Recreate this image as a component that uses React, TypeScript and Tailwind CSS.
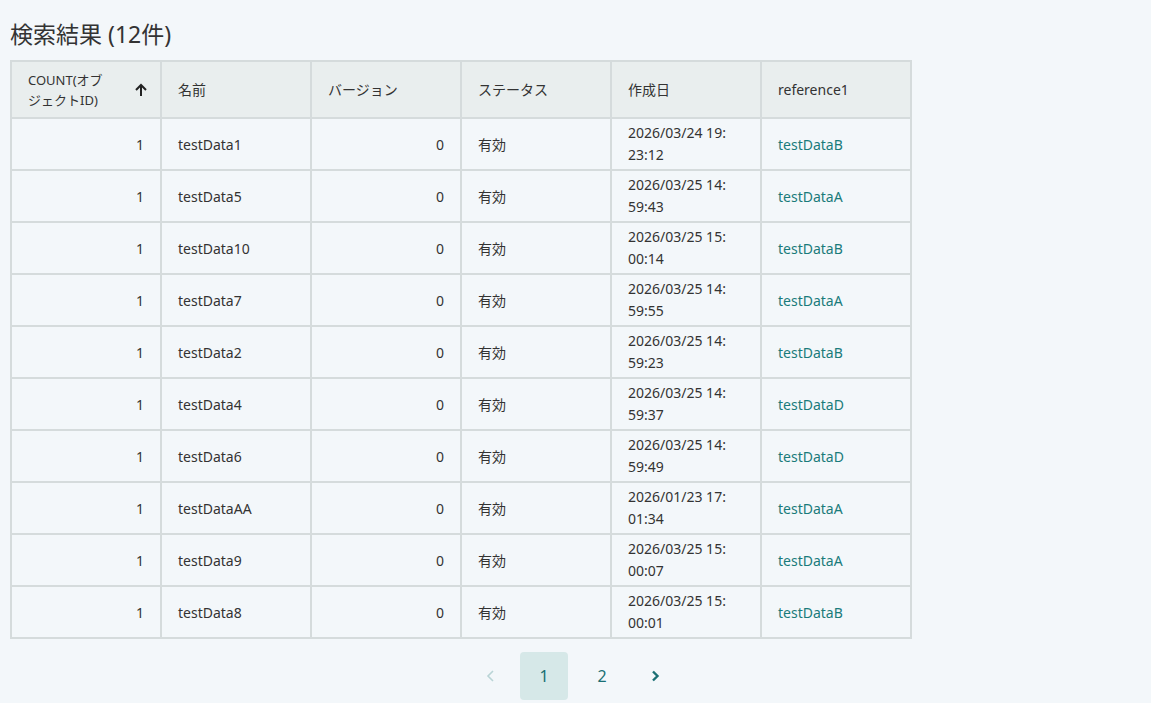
const rows = [
  ["testData1", "2026/03/24 19:", "23:12", "testDataB"],
  ["testData5", "2026/03/25 14:", "59:43", "testDataA"],
  ["testData10", "2026/03/25 15:", "00:14", "testDataB"],
  ["testData7", "2026/03/25 14:", "59:55", "testDataA"],
  ["testData2", "2026/03/25 14:", "59:23", "testDataB"],
  ["testData4", "2026/03/25 14:", "59:37", "testDataD"],
  ["testData6", "2026/03/25 14:", "59:49", "testDataD"],
  ["testDataAA", "2026/01/23 17:", "01:34", "testDataA"],
  ["testData9", "2026/03/25 15:", "00:07", "testDataA"],
  ["testData8", "2026/03/25 15:", "00:01", "testDataB"],
];

export default function App() {
  const cell = "border-2 border-[#d5dbdc] px-4 align-middle";
  return (
    <div className="min-h-[703px] bg-[#f3f7fa] text-[#333] px-[10px] pt-[18px] text-[14px]" style={{ fontFamily: '"Noto Sans", "Noto Sans CJK JP", sans-serif' }}>
      <h1 className="text-[23px] leading-[32px] mb-[10px] text-[#333]">検索結果 (12件)</h1>
      <table className="border-collapse table-fixed w-[899px]">
        <thead>
          <tr className="bg-[#e9eeee] h-[57px]">
            <th className={cell + " font-normal text-left w-[150px] pr-3 text-[13px] leading-[20px]"}>
              <div className="flex items-center justify-between">
                <span>COUNT(オブ<br />ジェクトID)</span>
                <svg width="14" height="14" viewBox="0 0 14 14" className="shrink-0"><path d="M7 13V2M2 7l5-5 5 5" stroke="#222" strokeWidth="2" fill="none" /></svg>
              </div>
            </th>
            {["名前", "バージョン", "ステータス", "作成日", "reference1"].map((h) => (
              <th key={h} className={cell + " font-normal text-left w-[150px]"}>{h}</th>
            ))}
          </tr>
        </thead>
        <tbody>
          {rows.map((r, i) => (
            <tr key={i} className="h-[52px]">
              <td className={cell + " text-right"}>1</td>
              <td className={cell}>{r[0]}</td>
              <td className={cell + " text-right"}>0</td>
              <td className={cell}>有効</td>
              <td className={cell + " leading-[22px]"}>{r[1]}<br />{r[2]}</td>
              <td className={cell + " text-[#1a7b7b]"}>{r[3]}</td>
            </tr>
          ))}
        </tbody>
      </table>
      <div className="flex justify-center pr-[5px] mt-[13px] gap-[10px] text-[#1a6f73] text-[16px]">
        <div className="w-[38px] h-[48px] flex items-center justify-center">
          <svg width="10" height="12" viewBox="0 0 10 12"><path d="M7 1L2 6l5 5" stroke="#b9d4d6" strokeWidth="1.6" fill="none" /></svg>
        </div>
        <div className="w-[48px] h-[48px] rounded bg-[#d6e8e8] flex items-center justify-center">1</div>
        <div className="w-[48px] h-[48px] flex items-center justify-center">2</div>
        <div className="w-[38px] h-[48px] flex items-center justify-center">
          <svg width="10" height="12" viewBox="0 0 10 12"><path d="M3 1.5L7.5 6 3 10.5" stroke="#1a6f73" strokeWidth="2.4" fill="none" /></svg>
        </div>
      </div>
    </div>
  );
}
